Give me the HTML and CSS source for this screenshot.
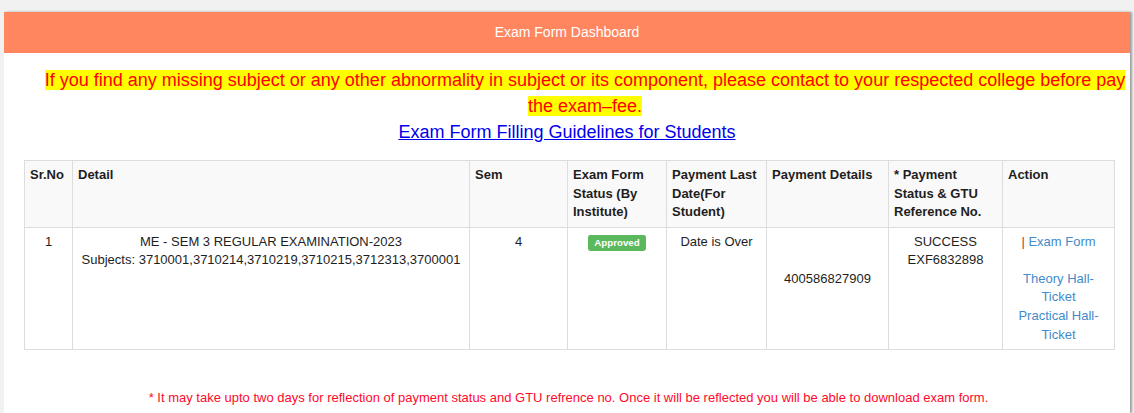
FILE: index.html
```html
<!DOCTYPE html>
<html lang="en">
<head>
<meta charset="utf-8">
<title>Exam Form Dashboard</title>
<link rel="stylesheet" href="styles.css">
</head>
<body>
<div class="panel">
  <div class="panel-heading">Exam Form Dashboard</div>
  <div class="panel-body">
    <p class="notice"><span class="hl">If you find any missing subject or any other abnormality in subject or its component, please contact to your respected college before pay the exam–fee.</span></p>
    <p class="guide"><a href="#">Exam Form Filling Guidelines for Students</a></p>
    <table class="grid">
      <colgroup>
        <col class="c-sr">
        <col class="c-detail">
        <col class="c-sem">
        <col class="c-status">
        <col class="c-last">
        <col class="c-pay">
        <col class="c-ref">
        <col class="c-action">
      </colgroup>
      <thead>
        <tr>
          <th>Sr.No</th>
          <th>Detail</th>
          <th>Sem</th>
          <th>Exam Form Status (By Institute)</th>
          <th>Payment Last Date(For Student)</th>
          <th>Payment Details</th>
          <th>* Payment Status &amp; GTU Reference No.</th>
          <th>Action</th>
        </tr>
      </thead>
      <tbody>
        <tr>
          <td>1</td>
          <td>ME - SEM 3 REGULAR EXAMINATION-2023<br>Subjects: 3710001,3710214,3710219,3710215,3712313,3700001</td>
          <td>4</td>
          <td><span class="label">Approved</span></td>
          <td>Date is Over</td>
          <td><br><br>400586827909</td>
          <td>SUCCESS<br>EXF6832898</td>
          <td><span class="sep">|</span> <a href="#">Exam Form</a><br><br><a href="#">Theory Hall-Ticket</a><br><a href="#">Practical Hall-Ticket</a></td>
        </tr>
      </tbody>
    </table>
    <p class="foot">* It may take upto two days for reflection of payment status and GTU refrence no. Once it will be reflected you will be able to download exam form.</p>
  </div>
</div>
</body>
</html>
```

FILE: styles.css
```css
html, body {
  margin: 0;
  padding: 0;
}

body {
  background: #f1f1f1;
  font-family: "Liberation Sans", Arial, sans-serif;
  font-size: 13px;
  line-height: 1.42857;
  color: #1e1e1e;
}

.panel {
  margin: 12px 4px 0;
  background: #fff;
  box-shadow: 2px 0 2px rgba(0, 0, 0, 0.35);
  min-height: 401px;
}

.panel-heading {
  background: #ff865e;
  color: #fff;
  font-size: 14px;
  text-align: center;
  height: 41px;
  line-height: 41px;
}

.panel-body {
  padding: 14px 0 0;
}

.notice {
  margin: 0 0 0 36px;
  font-size: 18px;
  line-height: 26px;
  color: #ff0000;
  text-align: center;
}

.hl {
  background: #ffff00;
}

.guide {
  margin: 0;
  font-size: 18px;
  line-height: 26px;
  text-align: center;
}

.guide a {
  color: #0000ee;
  text-decoration: underline;
}

.grid {
  margin: 15px 16px 0 20px;
  width: calc(100% - 36px);
  border-collapse: collapse;
  table-layout: fixed;
  border: 1px solid #ddd;
}

.c-sr { width: 48px; }
.c-detail { width: 397px; }
.c-sem { width: 98px; }
.c-status { width: 99px; }
.c-last { width: 100px; }
.c-pay { width: 122px; }
.c-ref { width: 114px; }
.c-action { width: 112px; }

.grid th,
.grid td {
  border: 1px solid #ddd;
  padding: 5px;
  vertical-align: top;
}

.grid th {
  background: #f9f9f9;
  text-align: left;
  font-weight: bold;
}

.grid td {
  text-align: center;
}

.label {
  display: inline;
  padding: 0.2em 0.6em 0.3em;
  font-size: 75%;
  font-weight: bold;
  line-height: 1;
  color: #fff;
  background: #5cb85c;
  border-radius: 0.25em;
  white-space: nowrap;
  vertical-align: baseline;
}

.grid td a {
  color: #428bca;
  text-decoration: none;
}

.sep {
  color: #b03a2e;
}

.foot {
  margin: 39px 0 0;
  padding-left: 3px;
  text-align: center;
  color: #ff0a2a;
}
```
